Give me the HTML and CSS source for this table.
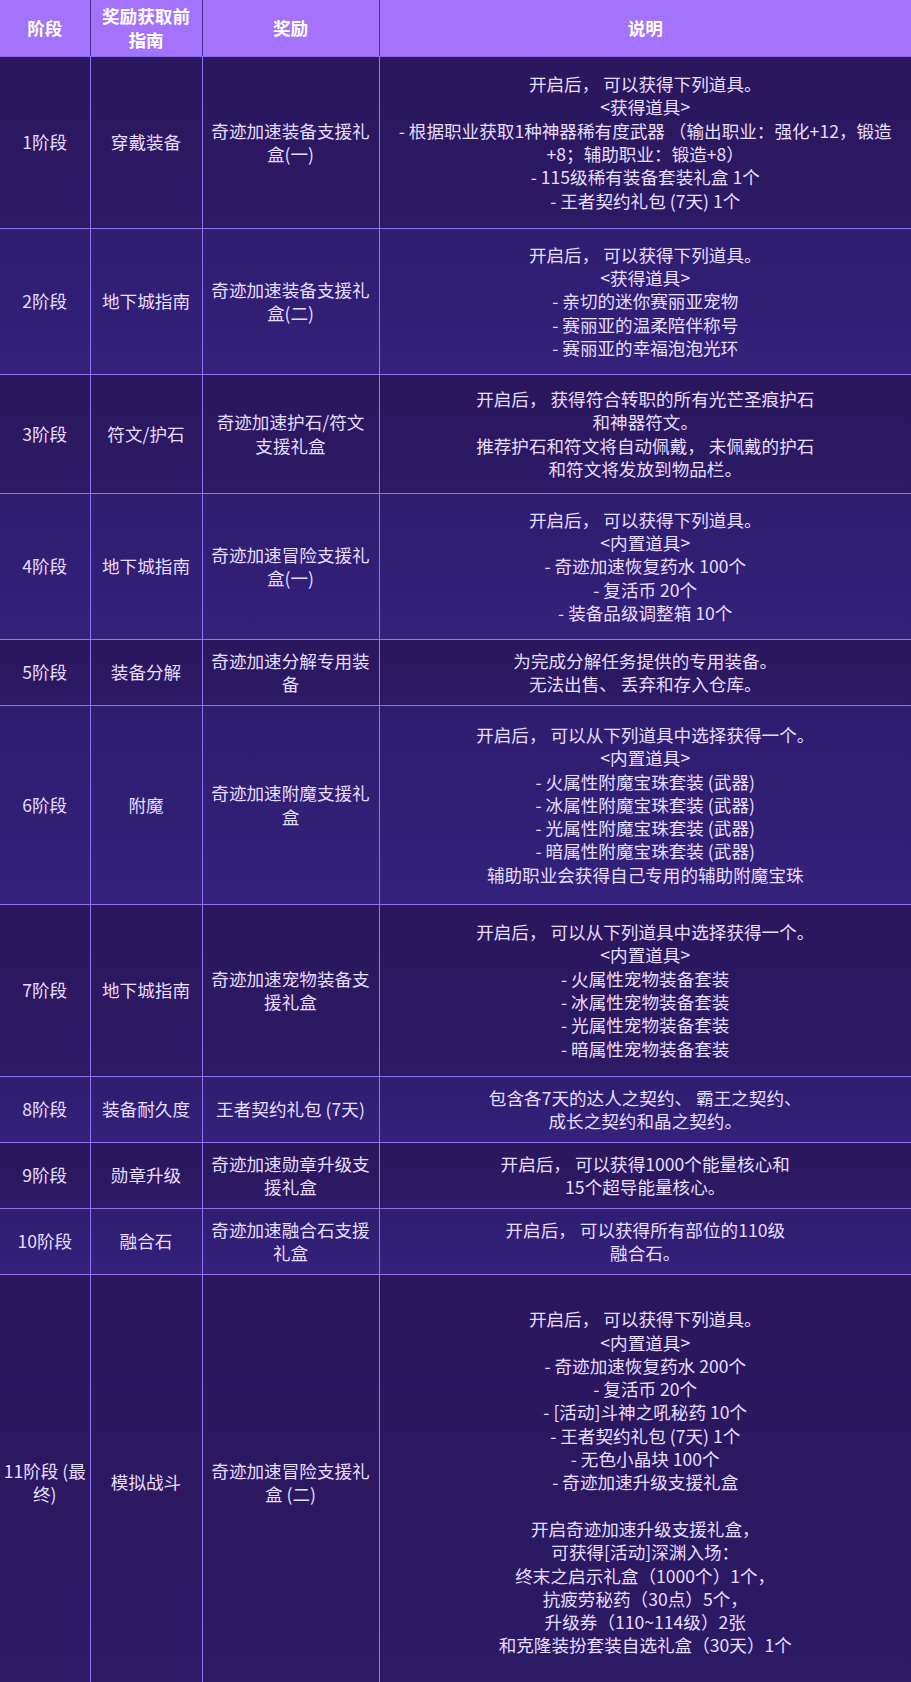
FILE: index.html
```html
<!DOCTYPE html>
<html lang="zh-CN">
<head>
<meta charset="utf-8">
<title>奇迹加速阶段奖励</title>
<link rel="stylesheet" href="styles.css">
</head>
<body>
<table class="stages">
  <colgroup>
    <col class="c-stage">
    <col class="c-guide">
    <col class="c-reward">
    <col class="c-desc">
  </colgroup>
  <thead>
    <tr class="head">
      <th class="stage">阶段</th>
      <th>奖励获取前指南</th>
      <th>奖励</th>
      <th class="desc">说明</th>
    </tr>
  </thead>
  <tbody>
    <tr class="odd h172">
      <td class="stage">1阶段</td>
      <td>穿戴装备</td>
      <td class="reward">奇迹加速装备支援礼盒(一)</td>
      <td class="desc">开启后， 可以获得下列道具。<br>&lt;获得道具&gt;<br>- 根据职业获取1种神器稀有度武器 （输出职业：强化+12，锻造+8；辅助职业：锻造+8）<br>- 115级稀有装备套装礼盒 1个<br>- 王者契约礼包 (7天) 1个</td>
    </tr>
    <tr class="even h146">
      <td class="stage">2阶段</td>
      <td>地下城指南</td>
      <td class="reward">奇迹加速装备支援礼盒(二)</td>
      <td class="desc">开启后， 可以获得下列道具。<br>&lt;获得道具&gt;<br>- 亲切的迷你赛丽亚宠物<br>- 赛丽亚的温柔陪伴称号<br>- 赛丽亚的幸福泡泡光环</td>
    </tr>
    <tr class="odd h119">
      <td class="stage">3阶段</td>
      <td>符文/护石</td>
      <td class="reward">奇迹加速护石/符文支援礼盒</td>
      <td class="desc">开启后， 获得符合转职的所有光芒圣痕护石<br>和神器符文。<br>推荐护石和符文将自动佩戴， 未佩戴的护石<br>和符文将发放到物品栏。</td>
    </tr>
    <tr class="even h146">
      <td class="stage">4阶段</td>
      <td>地下城指南</td>
      <td class="reward">奇迹加速冒险支援礼盒(一)</td>
      <td class="desc">开启后， 可以获得下列道具。<br>&lt;内置道具&gt;<br>- 奇迹加速恢复药水 100个<br>- 复活币 20个<br>- 装备品级调整箱 10个</td>
    </tr>
    <tr class="odd h66">
      <td class="stage">5阶段</td>
      <td>装备分解</td>
      <td class="reward">奇迹加速分解专用装备</td>
      <td class="desc">为完成分解任务提供的专用装备。<br>无法出售、 丢弃和存入仓库。</td>
    </tr>
    <tr class="even h199">
      <td class="stage">6阶段</td>
      <td>附魔</td>
      <td class="reward">奇迹加速附魔支援礼盒</td>
      <td class="desc">开启后， 可以从下列道具中选择获得一个。<br>&lt;内置道具&gt;<br>- 火属性附魔宝珠套装 (武器)<br>- 冰属性附魔宝珠套装 (武器)<br>- 光属性附魔宝珠套装 (武器)<br>- 暗属性附魔宝珠套装 (武器)<br>辅助职业会获得自己专用的辅助附魔宝珠</td>
    </tr>
    <tr class="odd h172">
      <td class="stage">7阶段</td>
      <td>地下城指南</td>
      <td class="reward">奇迹加速宠物装备支援礼盒</td>
      <td class="desc">开启后， 可以从下列道具中选择获得一个。<br>&lt;内置道具&gt;<br>- 火属性宠物装备套装<br>- 冰属性宠物装备套装<br>- 光属性宠物装备套装<br>- 暗属性宠物装备套装</td>
    </tr>
    <tr class="even h66">
      <td class="stage">8阶段</td>
      <td>装备耐久度</td>
      <td class="reward">王者契约礼包 (7天)</td>
      <td class="desc">包含各7天的达人之契约、 霸王之契约、<br>成长之契约和晶之契约。</td>
    </tr>
    <tr class="odd h66">
      <td class="stage">9阶段</td>
      <td>勋章升级</td>
      <td class="reward">奇迹加速勋章升级支援礼盒</td>
      <td class="desc">开启后， 可以获得1000个能量核心和<br>15个超导能量核心。</td>
    </tr>
    <tr class="even h66">
      <td class="stage">10阶段</td>
      <td>融合石</td>
      <td class="reward">奇迹加速融合石支援礼盒</td>
      <td class="desc">开启后， 可以获得所有部位的110级<br>融合石。</td>
    </tr>
    <tr class="odd h416">
      <td class="stage">11阶段 (最终)</td>
      <td>模拟战斗</td>
      <td class="reward">奇迹加速冒险支援礼盒 (二)</td>
      <td class="desc">开启后， 可以获得下列道具。<br>&lt;内置道具&gt;<br>- 奇迹加速恢复药水 200个<br>- 复活币 20个<br>- [活动]斗神之吼秘药 10个<br>- 王者契约礼包 (7天) 1个<br>- 无色小晶块 100个<br>- 奇迹加速升级支援礼盒<br><br>开启奇迹加速升级支援礼盒，<br>可获得[活动]深渊入场：<br>终末之启示礼盒（1000个）1个，<br>抗疲劳秘药（30点）5个，<br>升级券（110~114级）2张<br>和克隆装扮套装自选礼盒（30天）1个</td>
    </tr>
  </tbody>
</table>
</body>
</html>
```
FILE: styles.css
```css
html, body {
  margin: 0;
  padding: 0;
  background: #2a185f;
}

body {
  font-family: "Noto Sans CJK SC", "Noto Sans", sans-serif;
  font-size: 17.6px;
  line-height: 23.3px;
  color: #e6ddff;
}

.stages {
  width: 911px;
  table-layout: fixed;
  border-collapse: collapse;
  border-spacing: 0;
}

.c-stage { width: 90px; }
.c-guide { width: 112px; }
.c-reward { width: 177px; }
.c-desc { width: 532px; }

.stages th,
.stages td {
  text-align: center;
  vertical-align: middle;
  padding: 0 4px;
  border-right: 1px solid #9273f2;
  border-bottom: 1px solid #9273f2;
}

.stages th:last-child,
.stages td:last-child {
  border-right: none;
}

.head {
  height: 56px;
  background: #a374fb;
}

.head th {
  color: #ffffff;
  font-weight: 700;
  padding: 4px 4px;
  border-right-color: #4a2e9c;
  border-bottom-color: #8e6cf0;
}

.stages .stage {
  padding: 0 2px;
}

.stages .reward {
  padding: 0 6px;
}

.stages .desc {
  padding: 0 12px;
}

.odd {
  background: linear-gradient(180deg, #2a175d 0%, #2c1a65 100%);
}

.even {
  background: linear-gradient(180deg, #2f1d70 0%, #33217b 100%);
}

.h66 { height: 66px; }
.h119 { height: 119px; }
.h146 { height: 146px; }
.h172 { height: 172px; }
.h199 { height: 199px; }
.h416 { height: 416px; }
```
